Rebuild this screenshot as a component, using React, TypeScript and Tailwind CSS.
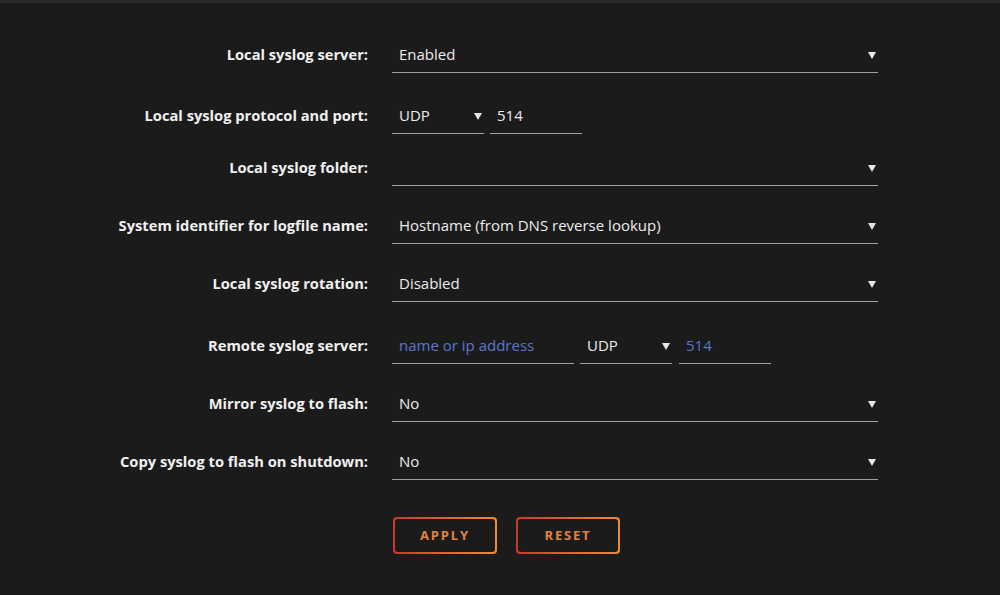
const FONT = { fontFamily: '"Open Sans", "Noto Sans", sans-serif' }

function Arrow() {
  return (
    <svg width="8" height="8" viewBox="0 0 8 8" className="shrink-0">
      <polygon points="0,1 8,1 4,8" fill="#e6e6e6" />
    </svg>
  )
}

function Select({ value, className = '' }: { value: string; className?: string }) {
  return (
    <div className={`h-[36px] flex items-center justify-between pl-[7px] pr-[2px] border-b border-[#a0a0a0] ${className}`}>
      <span className="text-[15px] text-[#ececec]">{value}</span>
      <Arrow />
    </div>
  )
}

function Input({ value, placeholder, className = '' }: { value?: string; placeholder?: boolean; className?: string }) {
  return (
    <div className={`h-[36px] flex items-center pl-[7px] border-b border-[#a0a0a0] ${className}`}>
      <span className={`text-[15px] ${placeholder ? 'text-[#5877cc]' : 'text-[#ececec]'}`}>{value}</span>
    </div>
  )
}

function Row({ label, mt, children }: { label: string; mt: string; children: React.ReactNode }) {
  return (
    <div className={`flex items-center ${mt}`}>
      <div className="w-[268px] text-right text-[14.7px] font-bold text-[#f0f0f0] pb-[2px]">{label}</div>
      <div className="ml-[24px] w-[486px] flex gap-[6px]">{children}</div>
    </div>
  )
}

function Button({ label }: { label: string }) {
  return (
    <div className="w-[104px] h-[37px] rounded-[4px] p-[2px] bg-gradient-to-r from-[#c9372c] to-[#ea8b3c]">
      <div className="w-full h-full rounded-[3px] bg-[#1c1b1c] flex items-center justify-center">
        <span className="text-[13px] font-bold tracking-[0.14em] text-[#e5823a]">{label}</span>
      </div>
    </div>
  )
}

export default function App() {
  return (
    <div className="w-[1000px] h-[595px] bg-[#1c1b1c] overflow-hidden" style={FONT}>
      <div className="h-[3px] bg-[#2b2b2b]" />
      <div className="pl-[100px] pt-[34px]">
        <Row label="Local syslog server:" mt="mt-0">
          <Select value="Enabled" className="flex-1" />
        </Row>
        <Row label="Local syslog protocol and port:" mt="mt-[25px]">
          <Select value="UDP" className="w-[92px]" />
          <Input value="514" className="w-[92px]" />
        </Row>
        <Row label="Local syslog folder:" mt="mt-[16px]">
          <Select value="" className="flex-1" />
        </Row>
        <Row label="System identifier for logfile name:" mt="mt-[22px]">
          <Select value="Hostname (from DNS reverse lookup)" className="flex-1" />
        </Row>
        <Row label="Local syslog rotation:" mt="mt-[22px]">
          <Select value="Disabled" className="flex-1" />
        </Row>
        <Row label="Remote syslog server:" mt="mt-[26px]">
          <Input value="name or ip address" placeholder className="w-[182px]" />
          <Select value="UDP" className="w-[92px]" />
          <Input value="514" placeholder className="w-[92px] ml-[1px]" />
        </Row>
        <Row label="Mirror syslog to flash:" mt="mt-[22px]">
          <Select value="No" className="flex-1" />
        </Row>
        <Row label="Copy syslog to flash on shutdown:" mt="mt-[22px]">
          <Select value="No" className="flex-1" />
        </Row>
        <div className="ml-[293px] mt-[37px] flex gap-[19px]">
          <Button label="APPLY" />
          <Button label="RESET" />
        </div>
      </div>
    </div>
  )
}
